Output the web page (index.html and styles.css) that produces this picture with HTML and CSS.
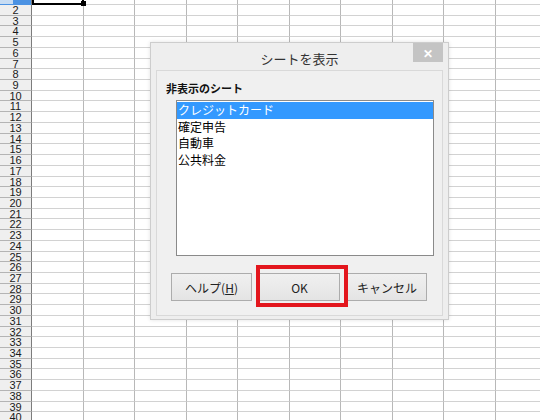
FILE: index.html
```html
<!DOCTYPE html>
<html lang="ja">
<head>
    <meta charset="UTF-8">
    <title>シートを表示</title>
    <link rel="stylesheet" href="styles.css">
</head>
<body>
    <div class="sheet" id="sheet"></div>

    <div class="dialog">
        <div class="dialog-title">
            シートを表示
            <span class="close">&#x2715;</span>
        </div>
        <div class="dialog-body">
            <div class="group-label">非表示のシート</div>
            <ul class="sheet-list">
                <li class="selected">クレジットカード</li>
                <li>確定申告</li>
                <li>自動車</li>
                <li>公共料金</li>
            </ul>
            <div class="buttons">
                <button class="button">ヘルプ(<u>H</u>)</button>
                <button class="button">OK</button>
                <button class="button">キャンセル</button>
            </div>
        </div>
    </div>

    <div class="mark"></div>

    <script>
        // build the spreadsheet grid: 40 rows, 10 columns
        const sheet = document.getElementById('sheet');
        for (let i = 1; i <= 40; i++) {
            const row = document.createElement('div');
            row.className = i === 1 ? 'row current' : 'row';
            let html = '<div class="row-head">' + i + '</div>';
            for (let c = 0; c < 10; c++) {
                html += '<div class="cell"></div>';
            }
            row.innerHTML = html;
            sheet.appendChild(row);
        }
    </script>
</body>
</html>
```

FILE: styles.css
```css
body {
    margin: 0;
    overflow: hidden;
    background: #fff;
    font-family: "Noto Sans CJK JP", sans-serif;
}
.sheet {
    margin-top: -5.73px;
}
.row {
    display: flex;
    height: 10.73px;
}
.row-head {
    flex: none;
    width: 32px;
    box-sizing: border-box;
    background: #efefef;
    border-right: 1px solid #7c7c7c;
    border-bottom: 1px solid #b4b4b4;
    font: 11px/10px "Liberation Sans", Arial, sans-serif;
    color: #1a1a1a;
    text-align: center;
    overflow: hidden;
}
.cell {
    flex: none;
    width: 51.5px;
    box-sizing: border-box;
    border-right: 1px solid #b8b8b8;
    border-bottom: 1px solid #d2d2d2;
}
.row.current .row-head {
    background: linear-gradient(to right, #c7dcf3 13px, #4b92e3 13px);
    border-bottom-color: #4b92e3;
    color: transparent;
}
.row.current .cell:nth-child(2) {
    position: relative;
    border: 2px solid #000;
    border-top: none;
}
.row.current .cell:nth-child(2)::after {
    content: "";
    position: absolute;
    right: -4px;
    bottom: -3px;
    width: 5px;
    height: 5px;
    background: #000;
}

/* dialog */
.dialog {
    position: absolute;
    left: 150px;
    top: 42px;
    width: 299px;
    height: 278px;
    box-sizing: border-box;
    background: #eeeeee;
    border: 1px solid #cdcdcd;
    box-shadow: 0 0 4px rgba(0, 0, 0, 0.12);
}
.dialog-title {
    position: relative;
    height: 27px;
    box-sizing: border-box;
    padding-top: 4px;
    font-size: 13px;
    line-height: 24px;
    color: #333;
    text-align: center;
}
.close {
    position: absolute;
    right: 5px;
    top: 0;
    width: 30px;
    height: 19px;
    background: #c4c4c4;
    color: #fff;
    font-size: 12px;
    font-weight: bold;
    line-height: 19px;
    text-align: center;
}
.dialog-body {
    margin: 0 5px;
    height: 246px;
    box-sizing: border-box;
    background: #f0f0f0;
    border: 1px solid #d9d9d9;
    padding-top: 10px;
}
.group-label {
    padding-left: 9px;
    font-size: 11px;
    font-weight: bold;
    line-height: 14px;
    color: #111;
}
.sheet-list {
    list-style: none;
    margin: 5px 0 0 19px;
    padding: 1px 0 0;
    width: 258px;
    height: 156px;
    box-sizing: border-box;
    background: #fff;
    border: 1px solid #8a8a8a;
}
.sheet-list li {
    padding-left: 1px;
    font-size: 12px;
    line-height: 16.5px;
    color: #000;
}
.sheet-list li.selected {
    background: #3399ff;
    color: #fff;
}
.buttons {
    display: flex;
    gap: 7px;
    margin: 17px 0 0 14px;
}
.button {
    width: 81px;
    height: 28px;
    padding: 0;
    background: linear-gradient(#f0f0f0, #e4e4e4);
    border: 1px solid #acacac;
    border-radius: 0;
    font-family: "Noto Sans CJK JP", sans-serif;
    font-size: 12px;
    color: #222;
}
.button:last-child {
    width: 80px;
}

/* red frame drawn over the OK button */
.mark {
    position: absolute;
    left: 256px;
    top: 265px;
    width: 92px;
    height: 42px;
    box-sizing: border-box;
    border: 4.5px solid #e3161d;
}
```
